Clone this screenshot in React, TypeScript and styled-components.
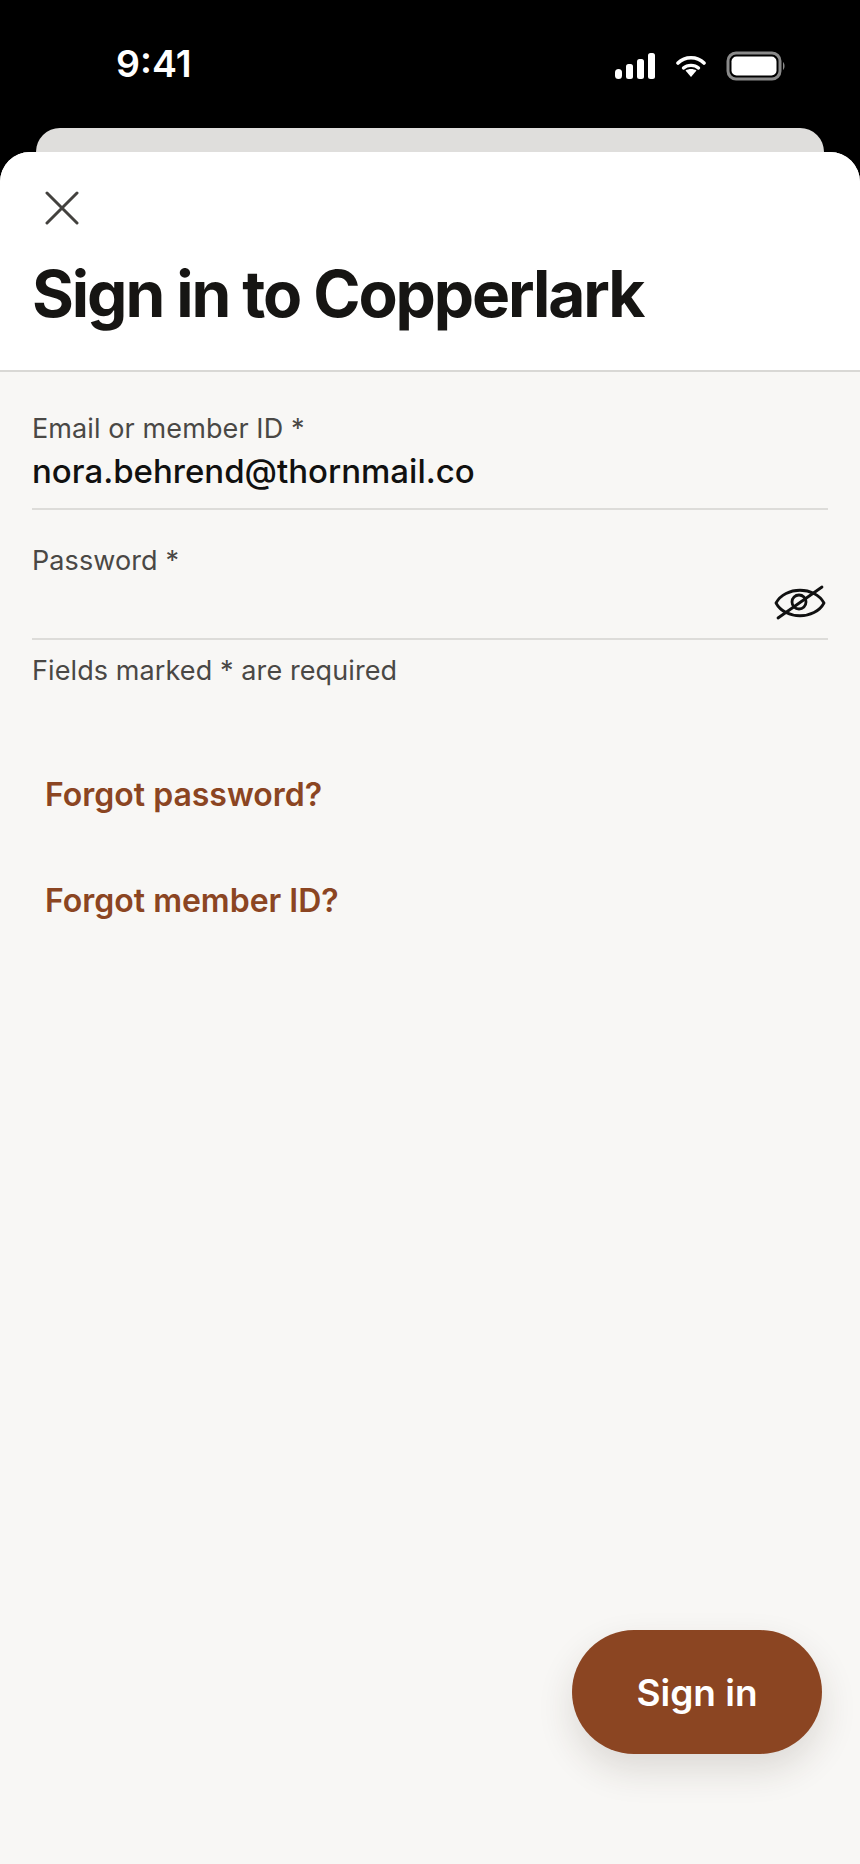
import React from "react";
import styled, { createGlobalStyle } from "styled-components";

const Global = createGlobalStyle`
  html, body { margin: 0; padding: 0; background: #000; }
  * { box-sizing: border-box; }
  #root { width: 860px; height: 1864px; }
`;

const Screen = styled.div`
  position: relative;
  width: 860px;
  height: 1864px;
  display: flex;
  flex-direction: column;
  background: #000;
  font-family: Inter, "Liberation Sans", sans-serif;
  overflow: hidden;
`;

const StatusBar = styled.div`
  height: 128px;
  flex: none;
  display: flex;
  align-items: flex-start;
  justify-content: space-between;
  padding: 42px 74px 0 116px;
`;

const Time = styled.div`
  color: #fff;
  font-size: 37.500px;
  line-height: 44px;
  font-weight: 600;
`;

const StatusIcons = styled.div`
  display: flex;
  align-items: center;
  gap: 20px;
  padding-top: 9px;
`;

const BackCard = styled.div`
  height: 24px;
  flex: none;
  margin: 0 36px;
  background: #dfdedc;
  border-radius: 28px 28px 0 0;
`;

const Sheet = styled.div`
  flex: 1;
  display: flex;
  flex-direction: column;
  background: #f8f7f5;
  border-radius: 30px 30px 0 0;
  overflow: hidden;
`;

const Header = styled.header`
  height: 220px;
  flex: none;
  background: #fff;
  border-bottom: 2px solid #d9d8d5;
  padding: 39px 32px 0;
`;

const CloseButton = styled.div`
  width: 34px;
  height: 34px;
  margin-left: 13px;
  display: flex;
`;

const Title = styled.h1`
  margin: 33px 0 0;
  font-size: 64px;
  line-height: 72px;
  font-weight: 700;
  letter-spacing: -2.100px;
  color: #161513;
`;

const Body = styled.main`
  padding: 41px 32px 0;
  display: flex;
  flex-direction: column;
`;

const Field = styled.div<{ $height: number }>`
  height: ${(p) => p.$height}px;
  border-bottom: 2px solid #dddcd9;
  display: flex;
  flex-direction: column;
  position: relative;
`;

const Label = styled.div`
  font-size: 27px;
  line-height: 32px;
  letter-spacing: 0.100px;
  color: #4a4845;
`;

const Value = styled.div`
  margin-top: 6px;
  font-size: 33px;
  line-height: 40px;
  font-weight: 500;
  color: #111110;
`;

const FieldGap = styled.div`
  height: 35px;
`;

const EyeToggle = styled.div`
  position: absolute;
  right: 2px;
  top: 40px;
  width: 52px;
  height: 36px;
`;

const Hint = styled.div`
  margin-top: 15px;
  font-size: 27px;
  line-height: 32px;
  letter-spacing: 0.100px;
  color: #4a4845;
`;

const Links = styled.nav`
  margin-top: 90px;
  padding-left: 13px;
  display: flex;
  flex-direction: column;
  gap: 70px;
`;

const LinkText = styled.a`
  font-size: 32px;
  line-height: 36px;
  font-weight: 600;
  color: #8b4522;
`;

const SignIn = styled.button`
  position: absolute;
  left: 572px;
  top: 1630px;
  width: 250px;
  height: 124px;
  border: 0;
  border-radius: 62px;
  background: #8b4522;
  color: #fff;
  font-family: inherit;
  font-size: 37px;
  font-weight: 600;
  box-shadow: 0 16px 36px rgba(60, 40, 25, 0.14);
`;

export default function App() {
  return (
    <Screen>
      <Global />
      <StatusBar>
        <Time>9:41</Time>
        <StatusIcons>
          <svg width="42" height="28" viewBox="0 0 42 28" fill="#fff">
            <rect x="1" y="17" width="7" height="10" rx="3.5" />
            <rect x="12" y="12" width="7" height="15" rx="2.5" />
            <rect x="23" y="7" width="7" height="20" rx="2.5" />
            <rect x="34" y="1" width="7" height="26" rx="2.5" />
          </svg>
          <svg width="30" height="24" viewBox="0 0 30 24">
            <path d="M2 9 C9 2 21 2 28 9" fill="none" stroke="#fff" strokeWidth="3.6" strokeLinecap="round" />
            <path d="M7.500 14 C11.500 10.500 18.500 10.500 22.500 14" fill="none" stroke="#fff" strokeWidth="3.4" strokeLinecap="round" />
            <path d="M9.500 16.500 C12.500 14.500 17.500 14.500 20.500 16.500 L15 23 Z" fill="#fff" />
          </svg>
          <svg width="60" height="30" viewBox="0 0 60 30">
            <rect x="2" y="2" width="52" height="26" rx="8" fill="none" stroke="#8a8a8a" strokeWidth="3" />
            <rect x="5.500" y="5.500" width="45" height="19" rx="5" fill="#fff" />
            <path d="M57 11 C59 12.500 59 17.500 57 19 Z" fill="#8a8a8a" />
          </svg>
        </StatusIcons>
      </StatusBar>
      <BackCard />
      <Sheet>
        <Header>
          <CloseButton>
            <svg width="34" height="34" viewBox="0 0 34 34" fill="none" stroke="#43413e" strokeWidth="3" strokeLinecap="round">
              <path d="M2 2 L32 32 M32 2 L2 32" />
            </svg>
          </CloseButton>
          <Title>Sign in to Copperlark</Title>
        </Header>
        <Body>
          <Field $height={97}>
            <Label>Email or member ID *</Label>
            <Value>nora.behrend@thornmail.co</Value>
          </Field>
          <FieldGap />
          <Field $height={95}>
            <Label>Password *</Label>
            <EyeToggle>
              <svg width="52" height="36" viewBox="0 0 52 36" fill="none" stroke="#111" strokeWidth="2.800" strokeLinecap="round">
                <path d="M2 18 C11 1 41 1 50 18 C41 35 11 35 2 18 Z" strokeLinejoin="round" />
                <circle cx="25" cy="17" r="7" />
                <path d="M4 33 L48 2" />
              </svg>
            </EyeToggle>
          </Field>
          <Hint>Fields marked * are required</Hint>
          <Links>
            <LinkText>Forgot password?</LinkText>
            <LinkText>Forgot member ID?</LinkText>
          </Links>
        </Body>
      </Sheet>
      <SignIn>Sign in</SignIn>
    </Screen>
  );
}
